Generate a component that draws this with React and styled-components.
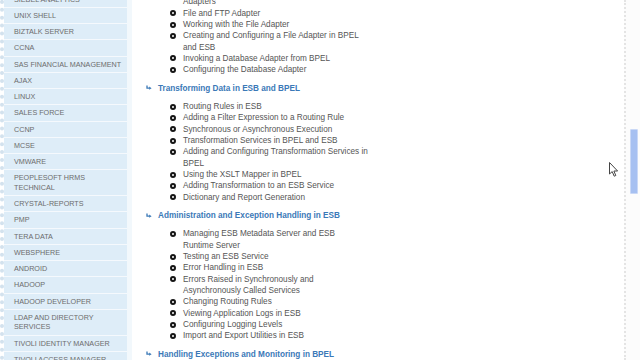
import styled, { createGlobalStyle } from 'styled-components';

const GlobalStyle = createGlobalStyle`
  html, body {
    margin: 0;
    padding: 0;
    height: 100%;
    overflow: hidden;
    background: #fff;
  }
  #root {
    height: 100%;
  }
`;

const Page = styled.div`
  position: relative;
  display: flex;
  height: 360px;
  overflow: hidden;
  font-family: 'Liberation Sans', Arial, sans-serif;
`;

const Sidebar = styled.ul`
  list-style: none;
  margin: -8.3px 0 0;
  padding: 0;
  width: 123px;
  flex-shrink: 0;
  align-self: flex-start;
  background: #deedf8;
  background-clip: padding-box;
  border-left: 4px dotted #d3e2ee;
  border-right: 5px solid #f2f8fc;
`;

const SideItem = styled.li`
  padding: 3px 4px 2.75px 10px;
  font-size: 7.2px;
  line-height: 9.5px;
  color: #6c6c6c;
  text-transform: uppercase;
  border-bottom: 1px solid #f5f9fd;
  white-space: pre-line;
`;

const Main = styled.div`
  flex: 1;
  padding-left: 14px;
  margin-top: -14.95px;
`;

const Section = styled.div``;

const Heading = styled.div`
  display: flex;
  align-items: center;
  gap: 6px;
  margin: 7.35px 0;
  font-size: 8.2px;
  line-height: 11px;
  font-weight: bold;
  color: #3b79b7;
`;

const List = styled.ul`
  list-style: none;
  margin: 0;
  padding: 0 0 0 24px;
`;

const Item = styled.li`
  display: flex;
  gap: 7px;
  font-size: 8.2px;
  line-height: 11.3px;
  color: #555;
  white-space: pre-line;
`;

const Bullet = styled.span`
  flex-shrink: 0;
  width: 2px;
  height: 2px;
  margin-top: 2.65px;
  border: 2px solid #151515;
  border-radius: 50%;
  background: #fff;
  visibility: ${({ $hidden }) => ($hidden ? 'hidden' : 'visible')};
`;

const Scrollbar = styled.div`
  width: 14px;
  flex-shrink: 0;
  border-left: 2px dotted #e4e4e4;
  background: #fcfcfc;
  display: flex;
  flex-direction: column;
  align-items: center;
`;

const Thumb = styled.div`
  width: 6px;
  height: 63px;
  margin-top: 129px;
  margin-left: 2px;
  background: #a6c0f1;
  border: 1px solid #c9d8f6;
  border-radius: 1px;
`;

const Cursor = styled.svg`
  position: absolute;
  left: 609px;
  top: 162px;
`;

const SectionIcon = () => (
  <svg width="6" height="6" viewBox="0 0 6 6">
    <path d="M1 0.5 V3.2 H3.6" fill="none" stroke="#3b79b7" strokeWidth="1.3" />
    <path d="M3.2 1.6 L5.6 3.2 L3.2 4.8 Z" fill="#3b79b7" />
  </svg>
);

const courses = [
  'Siebel Analytics',
  'Unix Shell',
  'Biztalk Server',
  'CCNA',
  'SAS Financial Management',
  'Ajax',
  'Linux',
  'Sales Force',
  'CCNP',
  'MCSE',
  'VMware',
  'Peoplesoft HRMS\nTechnical',
  'Crystal-Reports',
  'PMP',
  'Tera Data',
  'Websphere',
  'Android',
  'Hadoop',
  'Hadoop Developer',
  'LDAP and Directory\nServices',
  'Tivoli Identity Manager',
  'Tivoli Access Manager',
];

const sections = [
  {
    title: null,
    items: [
      'Understanding Technology and Application\nAdapters',
      'File and FTP Adapter',
      'Working with the File Adapter',
      'Creating and Configuring a File Adapter in BPEL\nand ESB',
      'Invoking a Database Adapter from BPEL',
      'Configuring the Database Adapter',
    ],
  },
  {
    title: 'Transforming Data in ESB and BPEL',
    items: [
      'Routing Rules in ESB',
      'Adding a Filter Expression to a Routing Rule',
      'Synchronous or Asynchronous Execution',
      'Transformation Services in BPEL and ESB',
      'Adding and Configuring Transformation Services in\nBPEL',
      'Using the XSLT Mapper in BPEL',
      'Adding Transformation to an ESB Service',
      'Dictionary and Report Generation',
    ],
  },
  {
    title: 'Administration and Exception Handling in ESB',
    items: [
      'Managing ESB Metadata Server and ESB\nRuntime Server',
      'Testing an ESB Service',
      'Error Handling in ESB',
      'Errors Raised in Synchronously and\nAsynchronously Called Services',
      'Changing Routing Rules',
      'Viewing Application Logs in ESB',
      'Configuring Logging Levels',
      'Import and Export Utilities in ESB',
    ],
  },
  {
    title: 'Handling Exceptions and Monitoring in BPEL',
    items: ['Fault Handling in BPEL', 'Catching Faults'],
  },
];

export default function App() {
  return (
    <>
      <GlobalStyle />
      <Page>
        <Sidebar>
          {courses.map((c) => (
            <SideItem key={c}>{c}</SideItem>
          ))}
        </Sidebar>
        <Main>
          {sections.map((s, i) => (
            <Section key={i}>
              {s.title && (
                <Heading>
                  <SectionIcon />
                  {s.title}
                </Heading>
              )}
              <List>
                {s.items.map((it) => (
                  <Item key={it}>
                    <Bullet />
                    <span>{it}</span>
                  </Item>
                ))}
              </List>
            </Section>
          ))}
        </Main>
        <Scrollbar>
          <Thumb />
        </Scrollbar>
        <Cursor width="10" height="16" viewBox="0 0 10 16">
          <path
            d="M0.5 0.5 L0.5 12 L3.2 9.6 L5.2 14.2 L6.8 13.5 L4.9 9 L8.6 9 Z"
            fill="#fff"
            stroke="#444"
            strokeWidth="1"
            strokeLinejoin="round"
          />
        </Cursor>
      </Page>
    </>
  );
}
